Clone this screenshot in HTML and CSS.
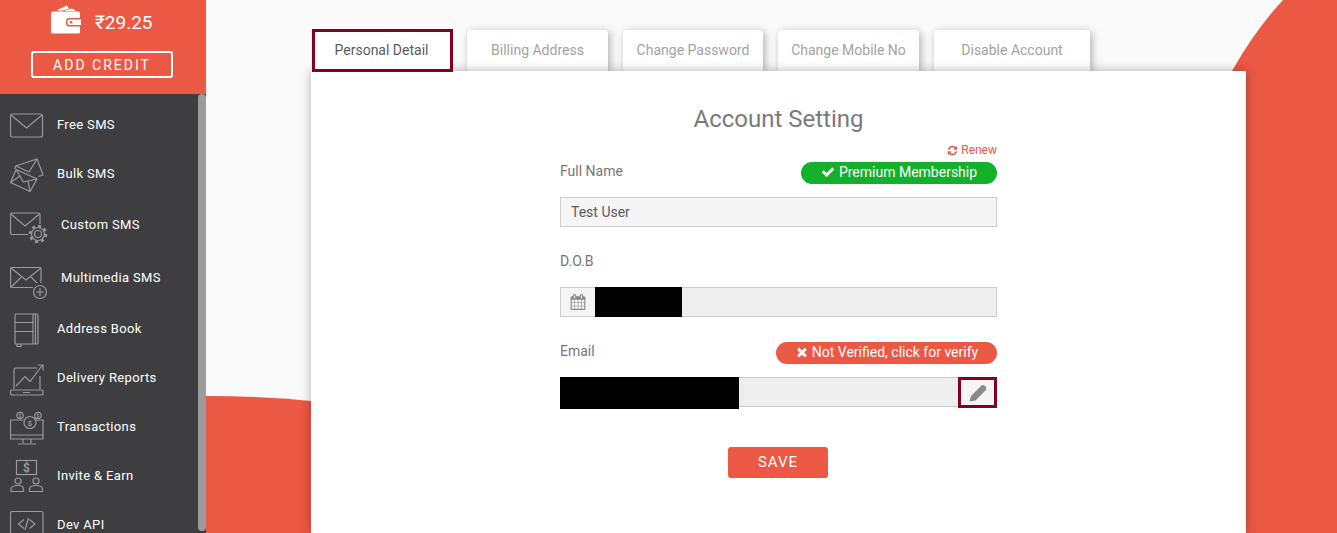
FILE: index.html
```html
<!DOCTYPE html>
<html lang="en">
<head>
<meta charset="utf-8">
<title>Account Setting</title>
<link rel="stylesheet" href="styles.css">
</head>
<body>
<aside class="sidebar">
  <div class="wallet">
    <div class="balance">
      <svg class="wallet-icon" viewBox="0 0 30 29" width="30" height="29">
        <path class="white-fill" d="M6 5 16 0.5 18 4 9 6Z"/>
        <path class="white-fill" d="M13 6 21 3.500 25 6Z"/>
        <path class="white-fill" d="M1.500 6.500H27.500Q29 6.500 29 8V13H18Q15 13 15 16.500V18Q15 21.500 18 21.500H29V27Q29 28.500 27.500 28.500H1.500Q0 28.500 0 27V8Q0 6.500 1.500 6.500Z"/>
        <path class="white-fill" d="M18 14.500H30V20H18Q16.500 20 16.500 18V16.500Q16.500 14.500 18 14.500Z"/>
        <circle class="red-fill" cx="20" cy="17.200" r="1.300"/>
      </svg>
      <span class="amount">₹29.25</span>
    </div>
    <a class="credit-btn">ADD CREDIT</a>
  </div>
  <nav class="menu">
    <span class="thumb"></span>
    <a class="item">
      <svg class="ico" viewBox="0 0 47 44"><rect x="0.500" y="11" width="32" height="23" rx="2"/><path d="M1 12 16.500 25 32 12"/></svg>
      <span>Free SMS</span>
    </a>
    <a class="item">
      <svg class="ico" viewBox="0 0 47 44"><path d="M5.500 14 27 7 33 23 28.500 24.500M5.500 14 5 17M6 14 19 20 27 7"/><path d="M6 17.500 27 27 20 39.500 0.500 30.500Z"/><path d="M6 17.500 13.500 30 27 27M0.500 30.500 10 24M20 39.500 18 29"/></svg>
      <span>Bulk SMS</span>
    </a>
    <a class="item item-tall">
      <svg class="ico" viewBox="0 0 47 44"><path d="M18 31.500H2Q0.500 31.500 0.500 30V11.500Q0.500 10 2 10H28.500Q30 10 30 11.500V21"/><path d="M1 11 15 23 29.500 11"/><circle cx="28" cy="31" r="3.500"/><circle cx="28" cy="31" r="6.500"/><circle class="teeth" cx="28" cy="31" r="8"/></svg>
      <span class="shifted">Custom SMS</span>
    </a>
    <a class="item item-tall">
      <svg class="ico" viewBox="0 0 47 44"><path d="M23 31.500H2Q0.500 31.500 0.500 30V13Q0.500 11.500 2 11.500H29.500Q31 11.500 31 13V27"/><path d="M1 12 16 24 31 12M1 31 11 21.500M21 21 27 27"/><circle cx="30" cy="36" r="6.500"/><path d="M30 32V40M26 36H34"/></svg>
      <span class="shifted">Multimedia SMS</span>
    </a>
    <a class="item">
      <svg class="ico" viewBox="0 0 47 44"><rect x="5" y="7" width="23" height="30" rx="1"/><path d="M23 7V37M25.500 7V37M5 15.500H23M5 24.500H23M7 37V39.500H11V37"/></svg>
      <span>Address Book</span>
    </a>
    <a class="item">
      <svg class="ico" viewBox="0 0 47 44"><path d="M4 33V14Q4 12 6 12H27M30 20V33"/><path d="M0.500 35Q0.500 34 2 34H31.500Q33 34 33 35V37Q33 39 31 39H2.500Q0.500 39 0.500 37ZM13 36.500H20"/><path d="M6 30 15 20.500 20 25.500 32.500 9M27.500 9H33V14.500"/></svg>
      <span>Delivery Reports</span>
    </a>
    <a class="item">
      <svg class="ico" viewBox="0 0 47 44"><path d="M13.500 15H0.500V34H33V15H26"/><path d="M0.500 30H33M13 34V38M21 34V38M8 39H26"/><circle cx="20" cy="17.500" r="6"/><circle cx="10" cy="10.500" r="3.200"/><circle cx="28" cy="10.500" r="3.200"/><text class="coin" x="20" y="20.500">$</text><text class="coin-sm" x="10" y="12.500">$</text><text class="coin-sm" x="28" y="12.500">$</text></svg>
      <span>Transactions</span>
    </a>
    <a class="item">
      <svg class="ico" viewBox="0 0 47 44"><rect x="6.500" y="6.500" width="20" height="14"/><circle cx="8" cy="27" r="3"/><circle cx="26" cy="27" r="3"/><path d="M1 37.500V35.500Q1 31.500 8 31.500Q13.500 31.500 13.500 35.500V37.500ZM19.500 37.500V35.500Q19.500 31.500 26 31.500Q32.500 31.500 32.500 35.500V37.500Z"/><text class="dollar" x="16.500" y="18">$</text></svg>
      <span>Invite &amp; Earn</span>
    </a>
    <a class="item">
      <svg class="ico" viewBox="0 0 47 44"><path d="M0.500 40V10Q0.500 8.500 2 8.500H31.500Q33 8.500 33 10V40"/><path d="M14 16.500 8.500 21 14 25.500M19.500 16.500 25 21 19.500 25.500M18.500 15 15 27"/></svg>
      <span>Dev API</span>
    </a>
  </nav>
</aside>

<main class="main">
  <svg class="backdrop" viewBox="0 0 1131 533" width="1131" height="533">
    <path class="red-fill" d="M0 396Q55 396 105 401V533H0Z"/>
    <path class="red-fill" d="M1077 0Q1049 30 1026 71L1026 533H1131V0Z"/>
  </svg>
  <ul class="tabs">
    <li class="tab tab-active">Personal Detail</li>
    <li class="tab">Billing Address</li>
    <li class="tab">Change Password</li>
    <li class="tab">Change Mobile No</li>
    <li class="tab">Disable Account</li>
  </ul>
  <section class="card">
    <h1 class="title">Account Setting</h1>
    <form class="form">
      <div class="renew-row">
        <a class="renew">
          <svg class="fa-sm" viewBox="0 0 1792 1792"><path class="red-fill" d="M1639 1056q0 5-1 7-64 268-268 434.500t-478 166.500q-146 0-282.500-55t-243.500-157l-129 129q-19 19-45 19t-45-19-19-45v-448q0-26 19-45t45-19h448q26 0 45 19t19 45-19 45l-137 137q71 66 161 102t187 36q134 0 250-65t186-179q11-17 53-117 8-23 30-23h192q13 0 22.500 9.500t9.500 22.500zm25-800v448q0 26-19 45t-45 19h-448q-26 0-45-19t-19-45 19-45l138-138q-148-137-349-137-134 0-250 65t-186 179q-11 17-53 117-8 23-30 23h-199q-13 0-22.500-9.500t-9.500-22.500v-7q65-268 270-434.500t480-166.500q146 0 284 55.500t245 156.500l130-129q19-19 45-19t45 19 19 45z"/></svg>
          Renew
        </a>
      </div>
      <div class="field">
        <div class="field-head">
          <label class="label">Full Name</label>
          <span class="badge badge-green">
            <svg class="fa" viewBox="0 0 1792 1792"><path class="white-fill" d="M1671 566q0 40-28 68l-724 724-136 136q-28 28-68 28t-68-28l-136-136-362-362q-28-28-28-68t28-68l136-136q28-28 68-28t68 28l294 295 656-657q28-28 68-28t68 28l136 136q28 28 28 68z"/></svg>
            Premium Membership
          </span>
        </div>
        <div class="input input-light">Test User</div>
      </div>
      <div class="field">
        <div class="field-head">
          <label class="label">D.O.B</label>
        </div>
        <div class="input input-group">
          <span class="addon">
            <svg class="cal" viewBox="0 0 1792 1792"><path class="grey-fill" d="M192 1664h288v-288h-288v288zm352 0h320v-288h-320v288zm-352-352h288v-320h-288v320zm352 0h320v-320h-320v320zm-352-384h288v-288h-288v288zm736 736h320v-288h-320v288zm-384-736h320v-288h-320v288zm768 736h288v-288h-288v288zm-384-352h320v-320h-320v320zm-352-864v-288q0-13-9.500-22.500t-22.500-9.500h-64q-13 0-22.500 9.500t-9.500 22.500v288q0 13 9.500 22.500t22.500 9.500h64q13 0 22.500-9.500t9.500-22.500zm736 864h288v-320h-288v320zm-384-384h320v-288h-320v288zm384 0h288v-288h-288v288zm32-480v-288q0-13-9.500-22.500t-22.500-9.500h-64q-13 0-22.500 9.500t-9.500 22.500v288q0 13 9.500 22.500t22.500 9.500h64q13 0 22.500-9.500t9.500-22.500zm384-64v1280q0 52-38 90t-90 38h-1408q-52 0-90-38t-38-90v-1280q0-52 38-90t90-38h128v-96q0-66 47-113t113-47h64q66 0 113 47t47 113v96h384v-96q0-66 47-113t113-47h64q66 0 113 47t47 113v96h128q52 0 90 38t38 90z"/></svg>
          </span>
          <span class="redact redact-dob"></span>
        </div>
      </div>
      <div class="field">
        <div class="field-head">
          <label class="label">Email</label>
          <span class="badge badge-red">
            <svg class="fa" viewBox="0 0 1792 1792"><path class="white-fill" d="M1490 1322q0 40-28 68l-136 136q-28 28-68 28t-68-28l-294-294-294 294q-28 28-68 28t-68-28l-136-136q-28-28-28-68t28-68l294-294-294-294q-28-28-28-68t28-68l136-136q28-28 68-28t68 28l294 294 294-294q28-28 68-28t68 28l136 136q28 28 28 68t-28 68l-294 294 294 294q28 28 28 68z"/></svg>
            Not Verified, click for verify
          </span>
        </div>
        <div class="input input-group">
          <span class="redact redact-email"></span>
          <span class="edit">
            <svg class="pencil" viewBox="0 0 18 18"><path class="grey-fill" d="M0.500 17.500 2 12 12.500 1.500Q14 0.500 15.500 1.500L17 3Q18 4.500 17 6L6.500 16.500Z"/></svg>
          </span>
        </div>
      </div>
      <div class="actions">
        <button class="save" type="button">SAVE</button>
      </div>
    </form>
  </section>
</main>
</body>
</html>
```

FILE: styles.css
```css
* { box-sizing: border-box; }

html, body {
  margin: 0;
  height: 533px;
  overflow: hidden;
}

body {
  display: flex;
  font-family: Roboto, "Liberation Sans", sans-serif;
  background: #fafafa;
}

.white-fill { fill: #fff; }
.red-fill { fill: #eb5844; }
.grey-fill { fill: #8a8a8a; }

/* Sidebar */
.sidebar {
  width: 206px;
  flex: none;
  display: flex;
  flex-direction: column;
  height: 533px;
}

.wallet {
  height: 94px;
  flex: none;
  background: #eb5844;
  padding: 5px 33px 0 31px;
  color: #fff;
}

.balance {
  display: flex;
  align-items: center;
  height: 29px;
  padding-left: 20px;
}

.wallet-icon { flex: none; }

.amount {
  margin-left: 14px;
  font-size: 19px;
  line-height: 29px;
  position: relative;
  top: 3px;
}

.credit-btn {
  display: block;
  width: 142px;
  height: 27px;
  margin-top: 17px;
  border: 2px solid #fff;
  border-radius: 3px;
  text-align: center;
  font-size: 14px;
  line-height: 24px;
  letter-spacing: 2px;
  color: #fff;
}

.menu {
  position: relative;
  flex: 1;
  min-height: 0;
  overflow: hidden;
  padding-top: 6px;
  background: #3e3e40;
}

.thumb {
  position: absolute;
  top: 0;
  right: 0;
  width: 8px;
  height: 437px;
  border-radius: 4px;
  background: #9b9b9b;
}

.item {
  display: flex;
  align-items: center;
  height: 49px;
  padding-left: 10px;
  font-size: 13px;
  letter-spacing: 0.35px;
  color: #fff;
}

.item-tall { height: 53px; }

.shifted { margin-left: 4px; }

.ico {
  width: 47px;
  height: 44px;
  flex: none;
  fill: none;
  stroke: #9a9a9a;
  stroke-width: 1.2;
}

.teeth {
  stroke-width: 2.500;
  stroke-dasharray: 3 3.280;
}

.coin, .coin-sm, .dollar {
  fill: #9a9a9a;
  stroke: none;
  text-anchor: middle;
  font-family: Roboto, sans-serif;
  font-weight: 700;
}

.coin { font-size: 8px; }
.coin-sm { font-size: 5px; }
.dollar { font-size: 12px; }

/* Main */
.main {
  position: relative;
  flex: 1;
  min-width: 0;
  display: flex;
  flex-direction: column;
  padding: 30px 91px 0 105px;
}

.backdrop {
  position: absolute;
  top: 0;
  left: 0;
}

.tabs {
  position: relative;
  display: grid;
  grid-template-columns: 139px 141px 140px 141px 156px;
  column-gap: 15px;
  margin: 0;
  padding: 0 0 0 2px;
  list-style: none;
  height: 41px;
  flex: none;
}

.tab {
  display: flex;
  align-items: center;
  justify-content: center;
  height: 41px;
  padding-bottom: 2px;
  border-radius: 4px 4px 0 0;
  background: #fff;
  box-shadow: 2px 2px 8px rgba(0, 0, 0, 0.3);
  font-size: 14px;
  color: #a3a3a3;
}

.tab-active {
  position: relative;
  z-index: 2;
  margin: -1px;
  height: 43px;
  padding-right: 2px;
  border: 3px solid #85001c;
  border-radius: 0;
  box-shadow: none;
  color: #5a5a5a;
}

.card {
  position: relative;
  z-index: 1;
  flex: 1;
  min-height: 0;
  background: #fff;
  box-shadow: 0 0 10px rgba(0, 0, 0, 0.3);
  padding-top: 34px;
}

.title {
  margin: 0;
  text-align: center;
  font-size: 24px;
  line-height: 28px;
  font-weight: 400;
  color: #7a7a7a;
}

.form {
  width: 437px;
  margin: 10px auto 0;
}

.renew-row {
  display: flex;
  justify-content: flex-end;
  height: 14px;
  margin-bottom: 5px;
}

.renew {
  display: flex;
  align-items: center;
  gap: 3px;
  font-size: 12px;
  line-height: 14px;
  color: #eb5844;
}

.fa-sm { width: 11px; height: 11px; }

.field { margin-bottom: 25px; }

.field-head {
  display: flex;
  justify-content: space-between;
  align-items: flex-start;
  height: 22px;
  margin-bottom: 13px;
}

.label {
  font-size: 14px;
  line-height: 18px;
  color: #777;
}

.badge {
  display: flex;
  align-items: center;
  justify-content: center;
  gap: 4px;
  height: 22px;
  padding-bottom: 2px;
  border-radius: 11px;
  font-size: 14px;
  color: #fff;
}

.badge-green { width: 196px; background: #13b02a; }
.badge-red { width: 221px; gap: 3px; background: #eb5844; }

.fa { width: 14px; height: 14px; flex: none; }

.input {
  height: 30px;
  border: 1px solid #ccc;
  font-size: 14px;
  color: #5c5c5c;
}

.input-light {
  padding-left: 10px;
  line-height: 28px;
  background: #f5f5f5;
}

.input-group {
  display: flex;
  background: #eee;
}

.addon {
  width: 34px;
  height: 28px;
  flex: none;
  display: flex;
  align-items: center;
  justify-content: center;
  padding-right: 1px;
  background: #f5f5f5;
}

.cal { width: 16px; height: 16px; }

.redact {
  display: block;
  flex: none;
  background: #000;
}

.redact-dob {
  width: 87px;
  height: 30px;
  margin-top: -1px;
}

.redact-email {
  width: 179px;
  height: 32px;
  margin: -1px 0 0 -1px;
  position: relative;
}

.edit {
  width: 39px;
  height: 31px;
  margin: -1px -1px 0 auto;
  flex: none;
  display: flex;
  align-items: center;
  justify-content: center;
  border: 3px solid #85001c;
  background: #f5f5f5;
}

.pencil { width: 18px; height: 18px; }

.actions {
  display: flex;
  justify-content: center;
  padding: 15px 1px 0 0;
}

.save {
  width: 100px;
  height: 31px;
  padding-bottom: 3px;
  border: 0;
  border-radius: 3px;
  background: #eb5844;
  color: #fff;
  font-family: Roboto, sans-serif;
  font-size: 15px;
  letter-spacing: 1px;
}
```
